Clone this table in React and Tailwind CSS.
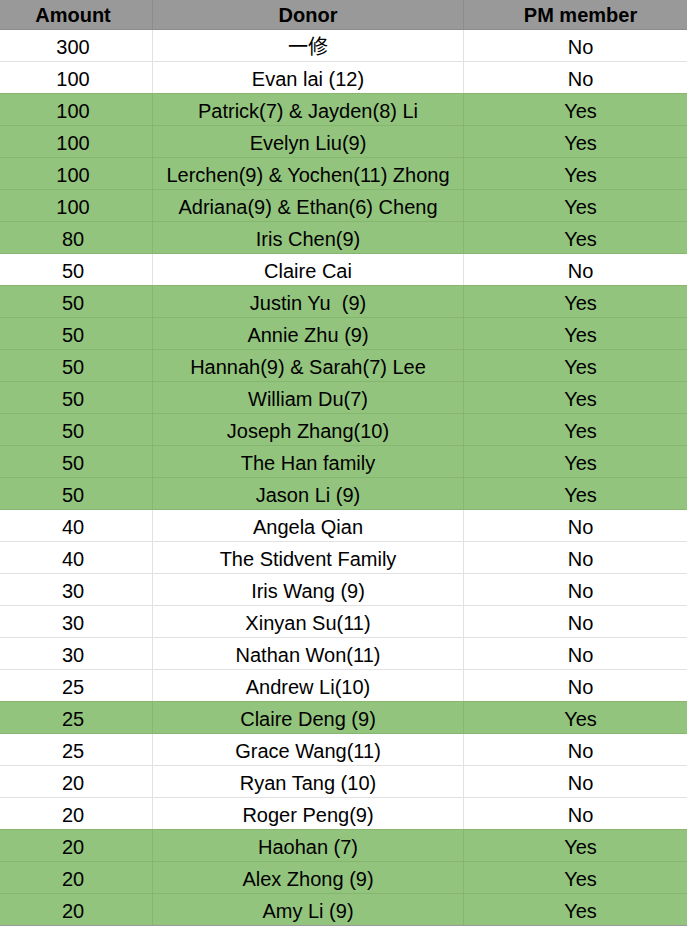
import React from "react";

const rows = [
  ["300", "一修", "No"],
  ["100", "Evan lai (12)", "No"],
  ["100", "Patrick(7) & Jayden(8) Li", "Yes"],
  ["100", "Evelyn Liu(9)", "Yes"],
  ["100", "Lerchen(9) & Yochen(11) Zhong", "Yes"],
  ["100", "Adriana(9) & Ethan(6) Cheng", "Yes"],
  ["80", "Iris Chen(9)", "Yes"],
  ["50", "Claire Cai", "No"],
  ["50", "Justin Yu  (9)", "Yes"],
  ["50", "Annie Zhu (9)", "Yes"],
  ["50", "Hannah(9) & Sarah(7) Lee", "Yes"],
  ["50", "William Du(7)", "Yes"],
  ["50", "Joseph Zhang(10)", "Yes"],
  ["50", "The Han family", "Yes"],
  ["50", "Jason Li (9)", "Yes"],
  ["40", "Angela Qian", "No"],
  ["40", "The Stidvent Family", "No"],
  ["30", "Iris Wang (9)", "No"],
  ["30", "Xinyan Su(11)", "No"],
  ["30", "Nathan Won(11)", "No"],
  ["25", "Andrew Li(10)", "No"],
  ["25", "Claire Deng (9)", "Yes"],
  ["25", "Grace Wang(11)", "No"],
  ["20", "Ryan Tang (10)", "No"],
  ["20", "Roger Peng(9)", "No"],
  ["20", "Haohan (7)", "Yes"],
  ["20", "Alex Zhong (9)", "Yes"],
  ["20", "Amy Li (9)", "Yes"],
];

const App = () => {
  return (
    <div className="w-[687px] bg-white text-black text-[20px] leading-none font-['Liberation_Sans','Noto_Sans_CJK_SC',sans-serif]">
      {/* header */}
      <div className="grid grid-cols-[153px_311px_223px] h-[30px] bg-[#999999] border-b border-[#8c8c8c] font-bold">
        <div className="flex items-center justify-center pr-[6px] pt-[1px] border-r border-[#8c8c8c]">Amount</div>
        <div className="flex items-center justify-center pt-[1px] border-r border-[#8c8c8c]">Donor</div>
        <div className="flex items-center justify-center pl-[10px] pt-[1px]">PM member</div>
      </div>

      {rows.map((r, i) => {
        const green = r[2] === "Yes";
        const nextGreen = rows[i + 1] && rows[i + 1][2] === "Yes";
        const last = i === rows.length - 1;
        const lineCls = last
          ? "border-[#9a9a9a]"
          : green || nextGreen
          ? "border-[#86b66f]"
          : "border-[#e2e2e2]";
        const colLine = green ? "border-[#86b66f]" : "border-[#e2e2e2]";
        return (
          <div
            key={i}
            className={`grid grid-cols-[153px_311px_223px] h-[32px] border-b ${lineCls} ${green ? "bg-[#93c47d]" : "bg-white"}`}
          >
            <div className={`flex items-center justify-center pr-[6px] pt-[3px] border-r ${colLine}`}>{r[0]}</div>
            <div className={`flex items-center justify-center pt-[3px] whitespace-pre border-r ${colLine}`}>{r[1]}</div>
            <div className="flex items-center justify-center pl-[10px] pt-[3px]">{r[2]}</div>
          </div>
        );
      })}
    </div>
  );
};

export default App;
